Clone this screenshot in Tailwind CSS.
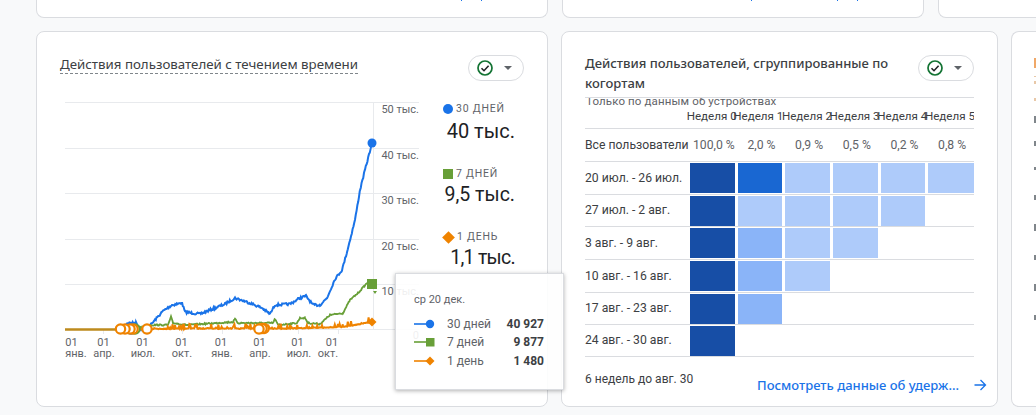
<!DOCTYPE html>
<html lang="ru">
<head>
  <meta charset="UTF-8" />
  <title>Отчёт</title>
  <script src="https://cdn.jsdelivr.net/npm/@tailwindcss/browser@4"></script>
</head>
<body class="bg-[#f8f9fa] font-['Roboto',sans-serif] text-[#3c4043] overflow-hidden h-[415px]">

  <!-- Top row, cut by the top of the window -->
  <div class="flex h-[18px] pl-[36px] gap-[14px] overflow-hidden">
    <div class="w-[512px] h-[18px] shrink-0 bg-white border border-t-0 border-[#dadce0] rounded-b-lg flex">
      <span class="ml-[424px] w-[1px] h-[1px] bg-[#1a73e8]"></span>
      <span class="ml-[19px] w-[1px] h-[1px] bg-[#1a73e8]"></span>
    </div>
    <div class="w-[362px] h-[18px] shrink-0 bg-white border border-t-0 border-[#dadce0] rounded-b-lg flex">
      <span class="ml-[188px] w-[1px] h-[1px] bg-[#1a73e8]"></span>
      <span class="ml-[85px] w-[1px] h-[1px] bg-[#1a73e8]"></span>
      <span class="ml-[19px] w-[1px] h-[1px] bg-[#1a73e8]"></span>
    </div>
    <div class="w-[98px] h-[18px] shrink-0 bg-white border border-t-0 border-r-0 border-[#dadce0] rounded-bl-lg"></div>
  </div>

  <!-- Main row -->
  <div class="flex mt-[13px] pl-[36px] gap-[13px] overflow-hidden">

    <!-- Card: users over time -->
    <div class="relative w-[512px] h-[376px] shrink-0 bg-white border border-[#dadce0] rounded-lg">
      <div class="flex justify-between items-start pl-[23px] pr-[23px] pt-[23px]">
        <h3 class="text-[13.3px] leading-[18px] font-normal text-[#3c4043] border-b border-dashed border-[#80868b] font-['Noto_Sans',sans-serif]">Действия пользователей с течением времени</h3>
        <div class="w-[56px] h-[26px] border border-[#dadce0] rounded-full flex items-center justify-between pl-[7px] pr-[11px]">
          <svg width="18" height="18" viewBox="0 0 18 18"><circle cx="9" cy="9" r="7" fill="none" stroke="#137333" stroke-width="1.7"/><path d="M5.5 9.2l2.5 2.5 4.6-4.9" fill="none" stroke="#202124" stroke-width="1.6"/></svg>
          <span class="w-0 h-0 border-x-[4px] border-x-transparent border-t-[4px] border-t-[#5f6368]"></span>
        </div>
      </div>

      <div class="flex mt-[14px] ml-[13px]">
        <svg class="shrink-0" width="392" height="270" viewBox="50 95 392 270" font-family="Roboto, sans-serif" font-size="11" fill="#5f6368">
          <g stroke="#e8eaed" stroke-width="1">
            <path d="M65 102.5H419M65 148.5H419M65 193.5H419M65 239.5H419M65 284.5H419M65 329.5H419"/>
            <path d="M373.5 102V329M103.5 329v5M143.5 329v5M182.5 329v5M222.5 329v5M260.5 329v5M298.5 329v5M338.5 329v5"/>
          </g>
          <g text-anchor="end">
            <text x="419" y="113">50 тыс.</text>
            <text x="419" y="159">40 тыс.</text>
            <text x="419" y="204">30 тыс.</text>
            <text x="419" y="250">20 тыс.</text>
            <text x="419" y="295">10 тыс.</text>
            <text x="419" y="339">0</text>
          </g>
          <g text-anchor="middle">
            <text x="71.5" y="346">01</text><text x="76" y="357">янв.</text>
            <text x="103.5" y="346">01</text><text x="104" y="357">апр.</text>
            <text x="142.5" y="346">01</text><text x="143" y="357">июл.</text>
            <text x="181.5" y="346">01</text><text x="182" y="357">окт.</text>
            <text x="221" y="346">01</text><text x="222" y="357">янв.</text>
            <text x="259.5" y="346">01</text><text x="260" y="357">апр.</text>
            <text x="297.5" y="346">01</text><text x="299" y="357">июл.</text>
            <text x="332" y="346">01</text><text x="328" y="357">окт.</text>
          </g>
          <path id="lineBlue" fill="none" stroke="#1a73e8" stroke-width="2"/>
          <path id="lineGreen" fill="none" stroke="#689f38" stroke-width="1.8"/>
          <path id="lineOrange" fill="none" stroke="#ef8300" stroke-width="2"/>
          <path d="M65 329.5H120" stroke="#bd8a1d" stroke-width="2.4"/>
          <g fill="#fff" stroke="#ef8300" stroke-width="2.2">
            <circle cx="131" cy="329" r="4.7" stroke="#1a73e8"/>
            <circle cx="135" cy="329" r="4.7" stroke="#689f38"/>
            <circle cx="133" cy="329" r="4.7"/>
            <circle cx="130" cy="329" r="4.7"/>
            <circle cx="125" cy="329" r="4.7"/>
            <circle cx="120.5" cy="329" r="4.7"/>
            <circle cx="147" cy="329" r="4.7"/>
            <circle cx="264" cy="328.5" r="4.7"/>
            <circle cx="262" cy="328.5" r="4.7"/>
            <circle cx="259" cy="329" r="4.7"/>
          </g>
          <circle cx="372" cy="143" r="4.5" fill="#1a73e8"/>
          <rect x="367" y="279" width="10" height="10" fill="#689f38"/>
          <path d="M373 291h4l-2 3z" fill="#689f38"/>
          <path d="M372 317.5l4.5 4.5-4.5 4.5-4.5-4.5z" fill="#ef8300"/>
        </svg>

        <!-- Legend -->
        <div class="w-[72px] shrink-0 ml-[1px] pt-[7px] whitespace-nowrap">
          <div class="h-[65px]">
            <div class="flex items-center gap-[3px] text-[10.5px] leading-[14px] tracking-[0.8px] text-[#5f6368]"><span class="w-[10px] h-[10px] rounded-full bg-[#1a73e8]"></span>30 ДНЕЙ</div>
            <div class="text-right text-[20px] leading-[28px] text-[#202124] pt-[1px]">40 тыс.</div>
          </div>
          <div class="h-[63px]">
            <div class="flex items-center gap-[3px] text-[10.5px] leading-[14px] tracking-[0.8px] text-[#5f6368]"><span class="w-[10px] h-[10px] bg-[#689f38]"></span>7 ДНЕЙ</div>
            <div class="text-right text-[19.5px] leading-[28px] text-[#202124]">9,5 тыс.</div>
          </div>
          <div>
            <div class="flex items-center gap-[3px] text-[10.5px] leading-[14px] tracking-[0.8px] text-[#5f6368]"><span class="w-[9px] h-[9px] rotate-45 bg-[#ef8300] mx-[1px]"></span>1 ДЕНЬ</div>
            <div class="text-right text-[19.5px] leading-[28px] tracking-[-0.7px] text-[#202124]">1,1 тыс.</div>
          </div>
        </div>
      </div>

      <!-- Tooltip -->
      <div class="absolute z-10 left-[358px] top-[241px] w-[169px] h-[117px] bg-white/90 border border-[#dadce0] shadow-[0_1px_4px_rgba(0,0,0,0.3)] pl-[18px] pr-[19px] pt-[19px] text-[12px] text-[#5f6368]">
        <div class="text-[11px] leading-[13px] mb-[8.5px]">ср 20 дек.</div>
        <div class="flex items-center h-[18.5px]">
          <svg class="mr-[12px]" width="21" height="10" viewBox="0 0 21 10"><path d="M0 5H16" stroke="#1a73e8" stroke-width="1.6"/><circle cx="16" cy="5" r="4.2" fill="#1a73e8"/></svg>
          <span class="flex-1">30 дней</span><b class="font-bold text-[#3c4043]">40 927</b>
        </div>
        <div class="flex items-center h-[18.5px]">
          <svg class="mr-[12px]" width="21" height="10" viewBox="0 0 21 10"><path d="M0 5H14" stroke="#689f38" stroke-width="1.6"/><rect x="12" y="1" width="8.5" height="8.5" fill="#689f38"/></svg>
          <span class="flex-1">7 дней</span><b class="font-bold text-[#3c4043]">9 877</b>
        </div>
        <div class="flex items-center h-[18.5px]">
          <svg class="mr-[12px]" width="21" height="10" viewBox="0 0 21 10"><path d="M0 5H14" stroke="#ef8300" stroke-width="1.6"/><path d="M16 0.5l4.5 4.5-4.5 4.5-4.5-4.5z" fill="#ef8300"/></svg>
          <span class="flex-1">1 день</span><b class="font-bold text-[#3c4043]">1 480</b>
        </div>
      </div>
    </div>

    <!-- Card: cohorts -->
    <div class="w-[437px] h-[376px] shrink-0 bg-white border border-[#dadce0] rounded-lg pl-[23px] pr-[23px] pt-[21px]">
      <div class="flex justify-between items-start h-[44px]">
        <h3 class="w-[320px] text-[13px] leading-[20px] font-medium text-[#3c4043] font-['Noto_Sans',sans-serif]">Действия пользователей, сгруппированные по когортам</h3>
        <div class="w-[56px] h-[26px] mt-[2px] border border-[#dadce0] rounded-full flex items-center justify-between pl-[7px] pr-[11px]">
          <svg width="18" height="18" viewBox="0 0 18 18"><circle cx="9" cy="9" r="7" fill="none" stroke="#137333" stroke-width="1.7"/><path d="M5.5 9.2l2.5 2.5 4.6-4.9" fill="none" stroke="#202124" stroke-width="1.6"/></svg>
          <span class="w-0 h-0 border-x-[4px] border-x-transparent border-t-[4px] border-t-[#5f6368]"></span>
        </div>
      </div>

      <div class="border-t border-[#dadce0] text-[12.2px] w-[389px] overflow-hidden">
        <div class="h-[31px] border-b border-[#dadce0] text-[#3c4043]">
          <div class="h-[10px] overflow-hidden">
            <div class="-mt-[3px] pl-[1px] text-[11.5px] leading-[13px] tracking-[0.13px] text-[#5f6368] whitespace-nowrap">Только по данным об устройствах</div>
          </div>
          <div class="grid grid-cols-[104px_repeat(6,47.67px)] text-[11.6px] leading-[14px] mt-[1px] whitespace-nowrap">
            <span></span>
            <span class="flex justify-end">Неделя 0</span>
            <span class="flex justify-end pr-[1px]">Неделя 1</span>
            <span class="flex justify-end">Неделя 2</span>
            <span class="flex justify-end">Неделя 3</span>
            <span class="flex justify-end">Неделя 4</span>
            <span class="flex justify-end">Неделя 5</span>
          </div>
        </div>
        <div class="grid grid-cols-[105px_repeat(6,47.67px)] items-center h-[33px] border-b border-[#dadce0] text-[#5f6368]">
          <span class="text-[#3c4043] whitespace-nowrap">Все пользователи</span>
          <span class="text-center">100,0 %</span><span class="text-center">2,0 %</span><span class="text-center">0,9 %</span><span class="text-center">0,5 %</span><span class="text-center">0,2 %</span><span class="text-center">0,8 %</span>
        </div>
        <div class="grid grid-cols-[105px_repeat(6,47.67px)] items-center h-[33px] border-b border-[#dadce0]">
          <span>20 июл. - 26 июл.</span>
          <span class="h-[30px] mr-[3px] bg-[#174ea6]"></span><span class="h-[30px] mr-[3px] bg-[#1967d2]"></span><span class="h-[30px] mr-[3px] bg-[#aecbfa]"></span><span class="h-[30px] mr-[3px] bg-[#aecbfa]"></span><span class="h-[30px] mr-[3px] bg-[#aecbfa]"></span><span class="h-[30px] mr-[2px] bg-[#aecbfa]"></span>
        </div>
        <div class="grid grid-cols-[105px_repeat(6,47.67px)] items-center h-[32px] border-b border-[#dadce0]">
          <span>27 июл. - 2 авг.</span>
          <span class="h-[30px] mr-[3px] bg-[#174ea6]"></span><span class="h-[30px] mr-[3px] bg-[#aecbfa]"></span><span class="h-[30px] mr-[3px] bg-[#aecbfa]"></span><span class="h-[30px] mr-[3px] bg-[#aecbfa]"></span><span class="h-[30px] mr-[3px] bg-[#aecbfa]"></span>
        </div>
        <div class="grid grid-cols-[105px_repeat(6,47.67px)] items-center h-[33px] border-b border-[#dadce0]">
          <span>3 авг. - 9 авг.</span>
          <span class="h-[30px] mr-[3px] bg-[#174ea6]"></span><span class="h-[30px] mr-[3px] bg-[#8ab4f8]"></span><span class="h-[30px] mr-[3px] bg-[#aecbfa]"></span><span class="h-[30px] mr-[3px] bg-[#aecbfa]"></span>
        </div>
        <div class="grid grid-cols-[105px_repeat(6,47.67px)] items-center h-[33px] border-b border-[#dadce0]">
          <span>10 авг. - 16 авг.</span>
          <span class="h-[30px] mr-[3px] bg-[#174ea6]"></span><span class="h-[30px] mr-[3px] bg-[#8ab4f8]"></span><span class="h-[30px] mr-[3px] bg-[#aecbfa]"></span>
        </div>
        <div class="grid grid-cols-[105px_repeat(6,47.67px)] items-center h-[32px] border-b border-[#dadce0]">
          <span>17 авг. - 23 авг.</span>
          <span class="h-[30px] mr-[3px] bg-[#174ea6]"></span><span class="h-[30px] mr-[3px] bg-[#8ab4f8]"></span>
        </div>
        <div class="grid grid-cols-[105px_repeat(6,47.67px)] items-center h-[32px] border-b border-[#dadce0]">
          <span>24 авг. - 30 авг.</span>
          <span class="h-[30px] mr-[3px] bg-[#174ea6]"></span>
        </div>
      </div>

      <div class="flex justify-between w-[402px] mt-[15px]">
        <span class="text-[12px] leading-[14px] text-[#3c4043]">6 недель до авг. 30</span>
        <div class="flex items-center mt-[5px] text-[#1a73e8]">
          <span class="text-[13px] leading-[16px] font-medium font-['Noto_Sans',sans-serif]">Посмотреть данные об удерж...</span>
          <svg class="ml-[15px]" width="13" height="12" viewBox="0 0 13 12"><path d="M0.5 6H11.5M6.5 1l5 5-5 5" fill="none" stroke="#1a73e8" stroke-width="1.3"/></svg>
        </div>
      </div>
    </div>

    <!-- Card at the window edge, only its start is visible -->
    <div class="w-[25px] h-[376px] shrink-0 bg-white border border-r-0 border-[#dadce0] rounded-l-lg pl-[22px] pt-[26px]">
      <div class="w-[2px] h-[10px] bg-[#f0a868]"></div>
      <div class="w-[2px] h-[1px] bg-[#e8c8a8] mt-[8px]"></div>
      <div class="w-[2px] h-[3px] bg-[#e8c8a8] mt-[4px]"></div>
      <div class="w-[2px] h-[3px] bg-[#e8c8a8] mt-[14px]"></div>
      <div class="w-[2px] h-[7px] bg-[#80868b] mt-[15px]"></div>
      <div class="w-[2px] h-[5px] bg-[#80868b] mt-[18px]"></div>
      <div class="w-[2px] h-[3px] bg-[#80868b] mt-[21px]"></div>
      <div class="w-[2px] h-[5px] bg-[#80868b] mt-[25px]"></div>
      <div class="w-[2px] h-[7px] bg-[#80868b] mt-[24px]"></div>
      <div class="w-[2px] h-[5px] bg-[#80868b] mt-[24px]"></div>
      <div class="w-[2px] h-[7px] bg-[#80868b] mt-[24px]"></div>
      <div class="w-[2px] h-[5px] bg-[#80868b] mt-[24px]"></div>
    </div>
  </div>

  <script>
    // pseudo random, so the series look the same on every load
    let seed = 7;
    function rnd() {
      seed = (seed * 16807) % 2147483647;
      return seed / 2147483647;
    }

    function buildPath(points, noise, spikes) {
      let d = "";
      for (let i = 0; i < points.length - 1; i++) {
        const [x1, y1] = points[i];
        const [x2, y2] = points[i + 1];
        for (let x = x1; x < x2; x += 0.8) {
          let y = y1 + (y2 - y1) * (x - x1) / (x2 - x1);
          y += (rnd() - 0.5) * noise;
          if (spikes && x > 147 && rnd() < spikes) y -= rnd() * 5;
          d += (d ? "L" : "M") + x.toFixed(1) + " " + y.toFixed(1);
        }
      }
      return d + "L" + points[points.length - 1].join(" ");
    }

    const blue = [[120,329],[124,329],[127,323],[136,323],[141,329],[147,329],[155,320],[163,311],[172,305],[182,303],[185,312],[192,313],[200,314],[215,308],[225,304],[235,298],[250,303],[262,308],[270,314],[275,305],[290,304],[300,298],[306,296],[313,305],[320,305],[327,298],[335,279],[342,270],[347,252],[355,220],[360,190],[365,170],[372,143]];
    const green = [[120,329],[135,329],[150,325],[168,325],[171,317],[173,323],[187,325],[217,323],[233,322],[235,319],[238,323],[250,323],[273,323],[275,319],[278,325],[297,323],[300,318],[305,318],[308,323],[320,324],[330,315],[343,313],[350,300],[358,293],[367,283],[372,284]];
    const orange = [[120,329],[147,329],[200,328.5],[290,328.5],[343,327],[372,322]];

    document.getElementById("lineBlue").setAttribute("d", buildPath(blue, 2.4));
    document.getElementById("lineGreen").setAttribute("d", buildPath(green, 1.4));
    document.getElementById("lineOrange").setAttribute("d", buildPath(orange, 0.8, 0.2));
  </script>
</body>
</html>
